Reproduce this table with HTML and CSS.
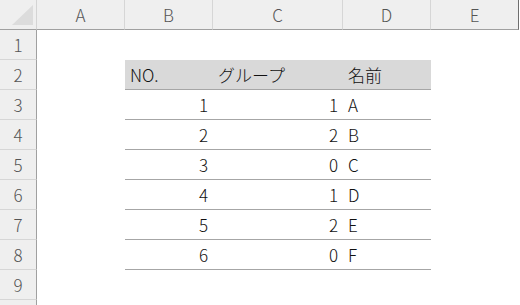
FILE: index.html
```html
<!doctype html>
<html lang="ja">
<head>
	<meta charset="UTF-8">
	<title>Sheet1</title>
	<link rel="stylesheet" href="styles.css">
</head>
<body>
	<div class="sheet">
		<!-- 列見出し -->
		<div class="corner">
			<svg width="36" height="29" viewBox="0 0 36 29"><polygon points="33,5 33,25 12,25" fill="#dcdcdc"/></svg>
		</div>
		<div class="colhead">A</div>
		<div class="colhead">B</div>
		<div class="colhead">C</div>
		<div class="colhead">D</div>
		<div class="colhead last">E</div>

		<!-- 1行目 -->
		<div class="rowhead">1</div>
		<div class="cell"></div><div class="cell"></div><div class="cell"></div><div class="cell"></div><div class="cell"></div>

		<!-- 2行目：表の見出し -->
		<div class="rowhead">2</div>
		<div class="cell"></div>
		<div class="cell th">NO.</div>
		<div class="cell th">グループ</div>
		<div class="cell th">名前</div>
		<div class="cell"></div>

		<div class="rowhead">3</div>
		<div class="cell"></div>
		<div class="cell td num">1</div>
		<div class="cell td num">1</div>
		<div class="cell td">A</div>
		<div class="cell"></div>

		<div class="rowhead">4</div>
		<div class="cell"></div>
		<div class="cell td num">2</div>
		<div class="cell td num">2</div>
		<div class="cell td">B</div>
		<div class="cell"></div>

		<div class="rowhead">5</div>
		<div class="cell"></div>
		<div class="cell td num">3</div>
		<div class="cell td num">0</div>
		<div class="cell td">C</div>
		<div class="cell"></div>

		<div class="rowhead">6</div>
		<div class="cell"></div>
		<div class="cell td num">4</div>
		<div class="cell td num">1</div>
		<div class="cell td">D</div>
		<div class="cell"></div>

		<div class="rowhead">7</div>
		<div class="cell"></div>
		<div class="cell td num">5</div>
		<div class="cell td num">2</div>
		<div class="cell td">E</div>
		<div class="cell"></div>

		<div class="rowhead">8</div>
		<div class="cell"></div>
		<div class="cell td num">6</div>
		<div class="cell td num">0</div>
		<div class="cell td">F</div>
		<div class="cell"></div>

		<div class="rowhead">9</div>
		<div class="cell"></div><div class="cell"></div><div class="cell"></div><div class="cell"></div><div class="cell"></div>

		<!-- 10行目は上端だけ見える -->
		<div class="rowhead"></div>
		<div class="cell"></div><div class="cell"></div><div class="cell"></div><div class="cell"></div><div class="cell"></div>
	</div>
</body>
</html>
```

FILE: styles.css
```css
*{
	padding:0;
	margin:0;
	box-sizing:border-box;
}
body{
	background:#fff;
	font-family:"Noto Sans CJK JP", "Noto Sans", sans-serif;
	font-size:17px;
	overflow:hidden;
}
.sheet{
	display:grid;
	grid-template-columns:37px 88px 88px 130px 88px 88px;
	grid-auto-rows:30px;
	height:305px;
	overflow:hidden;
}
/* 見出し */
.corner{
	background:#efefef;
	border-bottom:1px solid #a0a0a0;
	border-right:1px solid #d4d4d4;
}
.corner svg{
	display:block;
}
.colhead{
	background:#efefef;
	border-bottom:1px solid #a0a0a0;
	border-right:1px solid #d6d6d6;
	color:#555;
	display:flex;
	align-items:center;
	justify-content:center;
	font-weight:300;
}
.colhead.last{
	border-right-color:#6e6e6e;
}
.rowhead{
	background:#efefef;
	border-right:1px solid #a0a0a0;
	border-bottom:1px solid #d6d6d6;
	color:#555;
	display:flex;
	align-items:center;
	justify-content:center;
	font-weight:300;
}
/* セル */
.cell{
	display:flex;
	align-items:center;
	padding:0 5px;
	color:#111;
	font-weight:300;
}
.cell.th{
	background:#d9d9d9;
	border-bottom:1px solid #a6a6a6;
}
.cell.td{
	border-bottom:1px solid #a6a6a6;
}
.cell.num{
	justify-content:flex-end;
}
```
